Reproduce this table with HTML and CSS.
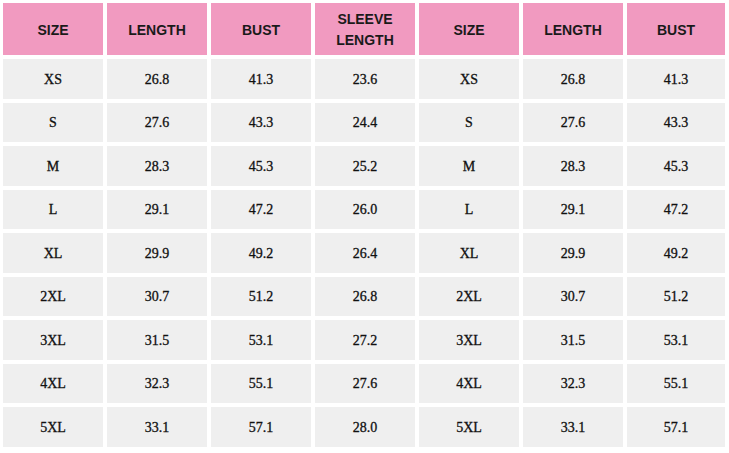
FILE: index.html
```html
<!DOCTYPE html>
<html>
<head>
<meta charset="utf-8">
<link rel="stylesheet" href="styles.css">
</head>
<body>
<div class="table">
  <div class="th">SIZE</div><div class="th">LENGTH</div><div class="th">BUST</div><div class="th">SLEEVE<br>LENGTH</div><div class="th">SIZE</div><div class="th">LENGTH</div><div class="th">BUST</div>
  <div class="td">XS</div><div class="td">26.8</div><div class="td">41.3</div><div class="td">23.6</div><div class="td">XS</div><div class="td">26.8</div><div class="td">41.3</div>
  <div class="td">S</div><div class="td">27.6</div><div class="td">43.3</div><div class="td">24.4</div><div class="td">S</div><div class="td">27.6</div><div class="td">43.3</div>
  <div class="td">M</div><div class="td">28.3</div><div class="td">45.3</div><div class="td">25.2</div><div class="td">M</div><div class="td">28.3</div><div class="td">45.3</div>
  <div class="td">L</div><div class="td">29.1</div><div class="td">47.2</div><div class="td">26.0</div><div class="td">L</div><div class="td">29.1</div><div class="td">47.2</div>
  <div class="td">XL</div><div class="td">29.9</div><div class="td">49.2</div><div class="td">26.4</div><div class="td">XL</div><div class="td">29.9</div><div class="td">49.2</div>
  <div class="td">2XL</div><div class="td">30.7</div><div class="td">51.2</div><div class="td">26.8</div><div class="td">2XL</div><div class="td">30.7</div><div class="td">51.2</div>
  <div class="td">3XL</div><div class="td">31.5</div><div class="td">53.1</div><div class="td">27.2</div><div class="td">3XL</div><div class="td">31.5</div><div class="td">53.1</div>
  <div class="td">4XL</div><div class="td">32.3</div><div class="td">55.1</div><div class="td">27.6</div><div class="td">4XL</div><div class="td">32.3</div><div class="td">55.1</div>
  <div class="td">5XL</div><div class="td">33.1</div><div class="td">57.1</div><div class="td">28.0</div><div class="td">5XL</div><div class="td">33.1</div><div class="td">57.1</div>
</div>
</body>
</html>
```
FILE: styles.css
```css
html, body {
  margin: 0;
  padding: 0;
  background: #ffffff;
}
body {
  padding: 3px 0 0 3px;
}
.table {
  display: grid;
  grid-template-columns: repeat(6, 100px) 98px;
  grid-template-rows: 52px repeat(9, 39.5px);
  gap: 4px;
}
.th {
  background: #f19ac0;
  color: #1a1a1a;
  font-family: "Liberation Sans", Arial, sans-serif;
  font-weight: bold;
  font-size: 14px;
  line-height: 21px;
  padding-top: 2px;
  box-sizing: border-box;
  display: flex;
  align-items: center;
  justify-content: center;
  text-align: center;
}
.td {
  background: #efefef;
  color: #111111;
  font-family: "Liberation Serif", "Times New Roman", serif;
  font-size: 14px;
  -webkit-text-stroke: 0.3px #111111;
  padding-top: 2px;
  box-sizing: border-box;
  display: flex;
  align-items: center;
  justify-content: center;
}
```
